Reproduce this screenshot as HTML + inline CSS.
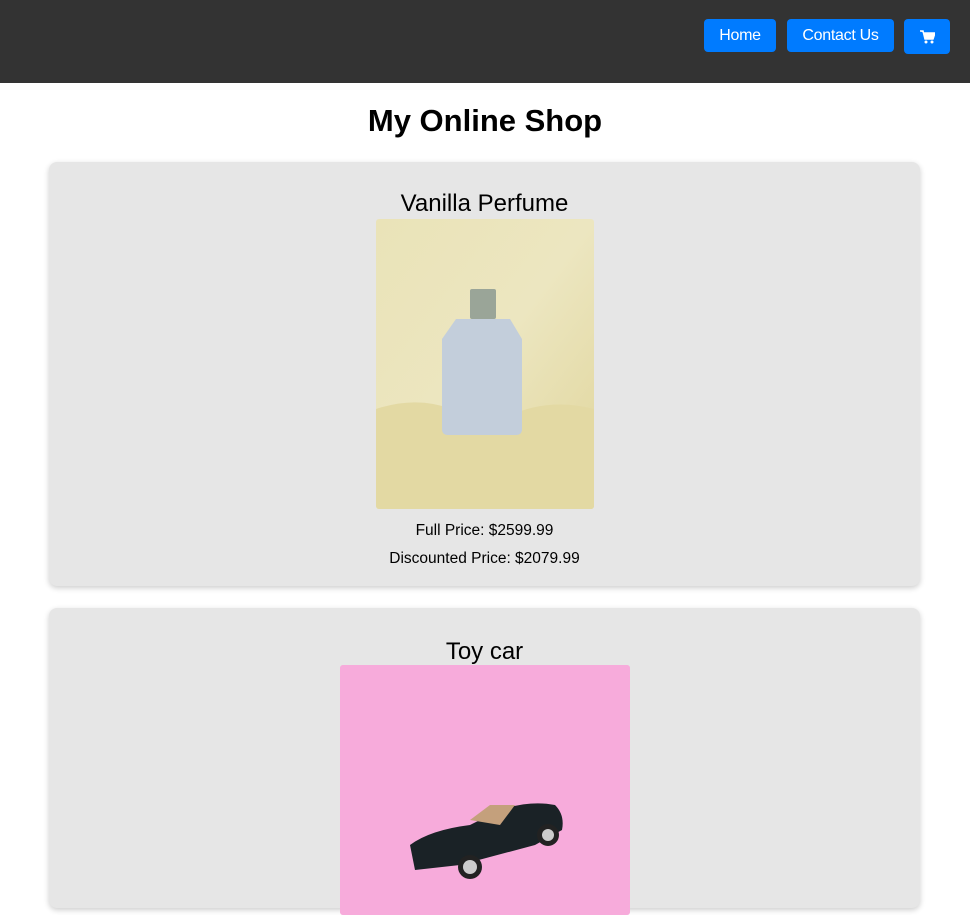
<!DOCTYPE html>
<html><head><style>
*{margin:0;padding:0;box-sizing:border-box}
body{width:970px;height:872px;overflow:hidden;background:#fff;font-family:"Liberation Sans",Arial,sans-serif;color:#000}
.nav{height:83px;background:#333;position:relative}
.btn{position:absolute;background:#007bff;color:#fff;border-radius:4px;font-size:16px;display:flex;align-items:center;justify-content:center;letter-spacing:-.3px}
h1{text-align:center;font-size:31px;font-weight:bold;position:absolute;top:103px;width:100%}
.card{position:absolute;left:49px;width:871px;background:#e6e6e6;border-radius:8px;box-shadow:0 2px 6px rgba(0,0,0,.2)}
.t{position:absolute;width:100%;text-align:center;font-size:24px}
.p{position:absolute;width:100%;text-align:center;font-size:15.5px}
</style></head><body>
<div class="nav">
<div class="btn" style="left:704px;top:19px;width:72px;height:33px">Home</div>
<div class="btn" style="left:787px;top:19px;width:107px;height:33px">Contact Us</div>
<div class="btn" style="left:904px;top:19px;width:46px;height:35px">
<svg width="15" height="14" viewBox="0 0 15 14"><path d="M0 1h3l2 8h8l2-6H4" fill="#fff" stroke="#fff" stroke-width="1.5"/><circle cx="6" cy="12" r="1.5" fill="#fff"/><circle cx="12" cy="12" r="1.5" fill="#fff"/></svg></div>
</div>
<h1>My Online Shop</h1>
<div class="card" style="top:162px;height:424px">
<div class="t" style="top:28px">Vanilla Perfume</div>
<svg style="position:absolute;left:327px;top:57px;border-radius:3px" width="218" height="290" viewBox="0 0 218 290">
<defs><linearGradient id="g1" x1="0" y1="0" x2="1" y2="1"><stop offset="0" stop-color="#eae3b8"/><stop offset=".5" stop-color="#ece6c0"/><stop offset="1" stop-color="#e0d59b"/></linearGradient></defs>
<rect width="218" height="290" fill="url(#g1)"/>
<path d="M0 190Q60 170 110 210Q160 175 218 190V290H0Z" fill="#e3d9a3"/>
<rect x="94" y="70" width="26" height="30" rx="2" fill="#9aa598"/>
<path d="M80 100h54l12 20v90q0 6-6 6H72q-6 0-6-6V120Z" fill="#c3cedb"/>
</svg>
<div class="p" style="top:360px">Full Price: $2599.99</div>
<div class="p" style="top:388px">Discounted Price: $2079.99</div>
</div>
<div class="card" style="top:608px;height:300px">
<div class="t" style="top:30px">Toy car</div>
<svg style="position:absolute;left:291px;top:57px;border-radius:3px" width="290" height="250" viewBox="0 0 290 250">
<rect width="290" height="250" fill="#f9b0de"/>
<rect width="290" height="250" fill="#f6a6d8" opacity=".5"/>
<path d="M70 180Q90 165 130 160L160 145Q190 135 215 140Q225 150 222 165L195 180L120 200L75 205Z" fill="#1a2226"/>
<path d="M130 155L150 140L175 140L160 160Z" fill="#c4a07c"/>
<circle cx="130" cy="202" r="12" fill="#222"/><circle cx="130" cy="202" r="7" fill="#ccc"/>
<circle cx="208" cy="170" r="11" fill="#222"/><circle cx="208" cy="170" r="6" fill="#ccc"/>
</svg>
</div>
</body></html>
